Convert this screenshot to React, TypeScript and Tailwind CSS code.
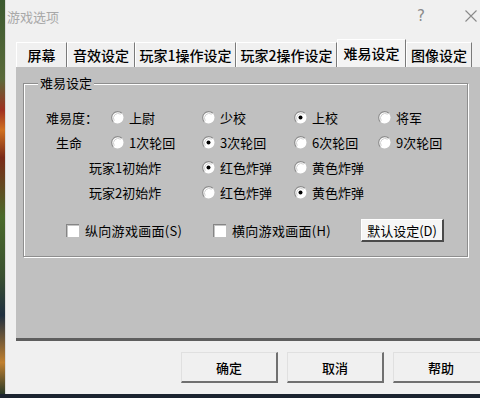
import React from "react";

const F = "font-['Noto_Sans_CJK_SC','Noto_Sans',sans-serif]";

function Radio({ checked }: { checked?: boolean }) {
  return (
    <svg width="13" height="13" viewBox="0 0 13 13" className="shrink-0">
      <circle cx="6.5" cy="6.5" r="6" fill="#ffffff" />
      <path d="M2.26 10.74 A6 6 0 0 1 10.74 2.26" fill="none" stroke="#8c8c8c" strokeWidth="1.2" />
      <path d="M3.3 9.7 A4.6 4.6 0 0 1 9.7 3.3" fill="none" stroke="#d0d0d0" strokeWidth="1" />
      {checked && <circle cx="6.5" cy="6.5" r="2" fill="#000000" />}
    </svg>
  );
}

function Opt({ label, checked }: { label: string; checked?: boolean }) {
  return (
    <div className="flex items-center gap-[5px]">
      <Radio checked={checked} />
      <span className="text-[13px] leading-none text-black">{label}</span>
    </div>
  );
}

function Check({ label }: { label: string }) {
  return (
    <div className="flex items-center gap-[6px]">
      <div className="w-[13px] h-[13px] bg-white border-t border-l border-[#858585] shadow-[inset_1px_1px_0_#c4c4c4] shrink-0" />
      <span className="text-[13px] leading-none text-black tracking-[0.3px]">{label}</span>
    </div>
  );
}

function Tab({ label, w, active }: { label: string; w: number; active?: boolean }) {
  return (
    <div
      className={
        "flex justify-center border-l border-t border-white border-r border-r-[#7a7a7a] text-[14px] font-medium leading-none text-black " +
        (active ? "h-[28px] bg-[#f4f4f4] pt-[6px]" : "h-[25px] bg-[#f0f0f0] pt-[5px]")
      }
      style={{ width: w }}
    >
      {label}
    </div>
  );
}

function Btn({ label }: { label: string }) {
  return (
    <div className="w-[97px] h-[31px] shrink-0 flex items-center justify-center bg-[#f0f0f0] border-t border-l border-t-[#e0e0e0] border-l-[#e0e0e0] border-r-2 border-b-2 border-r-[#707070] border-b-[#707070] text-[13px] font-medium leading-none text-black">
      {label}
    </div>
  );
}

export default function App() {
  return (
    <div className={"w-[480px] h-[398px] overflow-hidden flex bg-[#1c2430] " + F}>
      <div className="w-[5px] h-[394px] shrink-0 bg-[linear-gradient(to_bottom,#3c5a30_0%,#5a6a3a_20%,#a03020_28%,#d07020_33%,#7a2a18_40%,#4a6a2a_55%,#3a5030_70%,#203040_80%,#c08030_92%,#2a3a28_100%)]" />
      <div className="w-[490px] h-[394px] shrink-0 flex flex-col bg-[#f0f0f0] border-l border-[#dadada]">
        {/* title bar */}
        <div className="h-[32px] flex items-center pl-[1px] pr-[18px]">
          <span className="text-[13px] leading-none text-[#a8a8a8]">游戏选项</span>
          <div className="flex-1" />
          <span className="text-[15px] leading-none text-[#8a8a8a] font-['DejaVu_Sans',sans-serif]">?</span>
          <svg width="12" height="12" viewBox="0 0 12 12" className="ml-[40px]">
            <path d="M0.5 0.5 L11.5 11.5 M11.5 0.5 L0.5 11.5" stroke="#8a8a8a" strokeWidth="1.1" />
          </svg>
        </div>
        {/* tabs */}
        <div className="h-[35px] flex items-end pl-[10px]">
          <Tab label="屏幕" w={51} />
          <Tab label="音效设定" w={68} />
          <Tab label="玩家1操作设定" w={101} />
          <Tab label="玩家2操作设定" w={101} />
          <Tab label="难易设定" w={69} active />
          <Tab label="图像设定" w={66} />
        </div>
        {/* panel */}
        <div className="ml-[10px] h-[274px] bg-[#c0c0c0] border-b-[3px] border-[#5e5e5e] pt-[16px] pl-[7px]">
          <div className="relative w-[445px] h-[174px] border border-[#8e8e8e] shadow-[inset_1px_1px_0_#ffffff,1px_1px_0_#ffffff]">
            <span className="absolute left-[14px] -top-[9px] px-[2px] bg-[#c0c0c0] text-[13px] leading-[16px] text-black">
              难易设定
            </span>
            <div className="pt-[21px] grid grid-cols-[87px_91px_92px_84px_1fr] auto-rows-[25px] items-center">
              <span className="pl-[22px] text-[13px] leading-none">难易度：</span>
              <Opt label="上尉" />
              <Opt label="少校" />
              <Opt label="上校" checked />
              <Opt label="将军" />

              <span className="pl-[32px] text-[13px] leading-none">生命</span>
              <Opt label="1次轮回" />
              <Opt label="3次轮回" checked />
              <Opt label="6次轮回" />
              <Opt label="9次轮回" />

              <span className="col-span-2 pl-[65px] text-[13px] leading-none">玩家1初始炸</span>
              <Opt label="红色炸弹" checked />
              <Opt label="黄色炸弹" />
              <span />

              <span className="col-span-2 pl-[65px] text-[13px] leading-none">玩家2初始炸</span>
              <Opt label="红色炸弹" />
              <Opt label="黄色炸弹" checked />
              <span />
            </div>
            <div className="mt-[14px] flex items-center h-[23px]">
              <div className="ml-[42px] w-[147px]">
                <Check label="纵向游戏画面(S)" />
              </div>
              <div className="w-[148px]">
                <Check label="横向游戏画面(H)" />
              </div>
              <div className="w-[83px] h-[23px] flex items-center justify-center bg-[#f6f6f6] border-t border-l border-white border-r-2 border-b-2 border-r-[#4a4a4a] border-b-[#4a4a4a] text-[13px] leading-none text-black">
                默认设定(D)
              </div>
            </div>
          </div>
        </div>
        {/* buttons */}
        <div className="mt-[11px] pl-[175px] flex gap-[9px]">
          <Btn label="确定" />
          <Btn label="取消" />
          <Btn label="帮助" />
        </div>
      </div>
    </div>
  );
}
